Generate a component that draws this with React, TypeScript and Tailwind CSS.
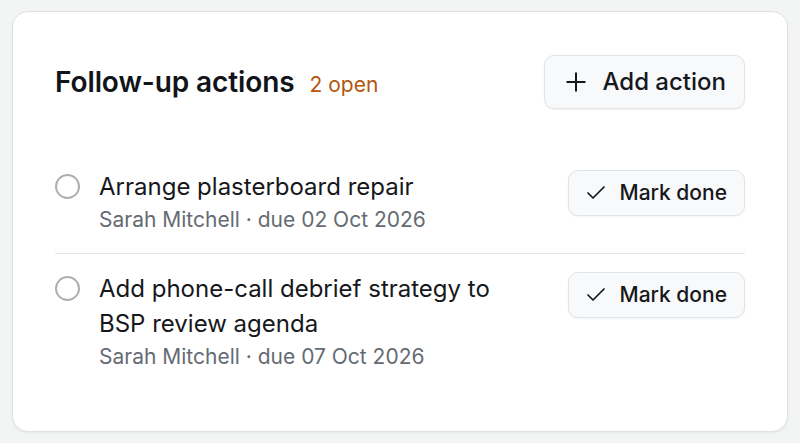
import { Plus, Check } from "lucide-react";

interface ActionItem {
  id: string;
  title: string;
  owner: string;
  due: string;
}

const actions: ActionItem[] = [
  { id: "a1", title: "Arrange plasterboard repair", owner: "Sarah Mitchell", due: "02 Oct 2026" },
  {
    id: "a2",
    title: "Add phone-call debrief strategy to BSP review agenda",
    owner: "Sarah Mitchell",
    due: "07 Oct 2026",
  },
];

function ActionRow({ item }: { item: ActionItem }) {
  return (
    <li className="flex items-start justify-between gap-6 py-[17px] border-b border-[#e3e5e7] last:border-b-0">
      <div className="flex items-start gap-[19px] min-w-0">
        <span className="mt-[5px] h-[25px] w-[25px] shrink-0 rounded-full border-2 border-[#adb0b3] bg-white" />
        <div className="min-w-0 max-w-[420px]">
          <p className="text-[24px] leading-[35px] text-[#16181b]">{item.title}</p>
          <p className="text-[21px] leading-[32px] text-[#656b73]">
            {item.owner} · due {item.due}
          </p>
        </div>
      </div>
      <button
        type="button"
        className="mt-px flex h-[46px] shrink-0 items-center gap-[11px] rounded-[10px] border border-[#e1e4e6] bg-[#f8f9fa] pl-[15px] pr-[17px] text-[21px] font-medium text-[#16181b] shadow-[0_1px_2px_rgba(0,0,0,0.05)]"
      >
        <Check className="h-[24px] w-[24px]" strokeWidth={1.75} />
        <span>Mark done</span>
      </button>
    </li>
  );
}

export default function App() {
  return (
    <div
      className="min-h-[443px] bg-[#f3f4f4] px-3 pt-[11px] pb-3"
      style={{ fontFamily: "Inter, 'Noto Sans', sans-serif" }}
    >
      <section className="rounded-[16px] border border-[#dfe1e3] bg-white px-[42px] pt-[43px] pb-[41px] shadow-[0_1px_3px_rgba(0,0,0,0.06)]">
        <header className="flex items-center justify-between">
          <div className="flex items-baseline gap-[15px]">
            <h2 className="text-[28px] font-semibold tracking-[-0.1px] text-[#111418]">Follow-up actions</h2>
            <span className="text-[21px] text-[#b4570f]">{actions.length} open</span>
          </div>
          <button
            type="button"
            className="flex h-[54px] items-center gap-[11px] rounded-[10px] border border-[#e1e4e6] bg-[#f8f9fa] pl-[16px] pr-[18px] text-[24px] font-medium text-[#16181b] shadow-[0_1px_2px_rgba(0,0,0,0.05)]"
          >
            <Plus className="h-[30px] w-[30px]" strokeWidth={1.6} />
            <span>Add action</span>
          </button>
        </header>

        <ul className="mt-[43px]">
          {actions.map((item) => (
            <ActionRow key={item.id} item={item} />
          ))}
        </ul>
      </section>
    </div>
  );
}
